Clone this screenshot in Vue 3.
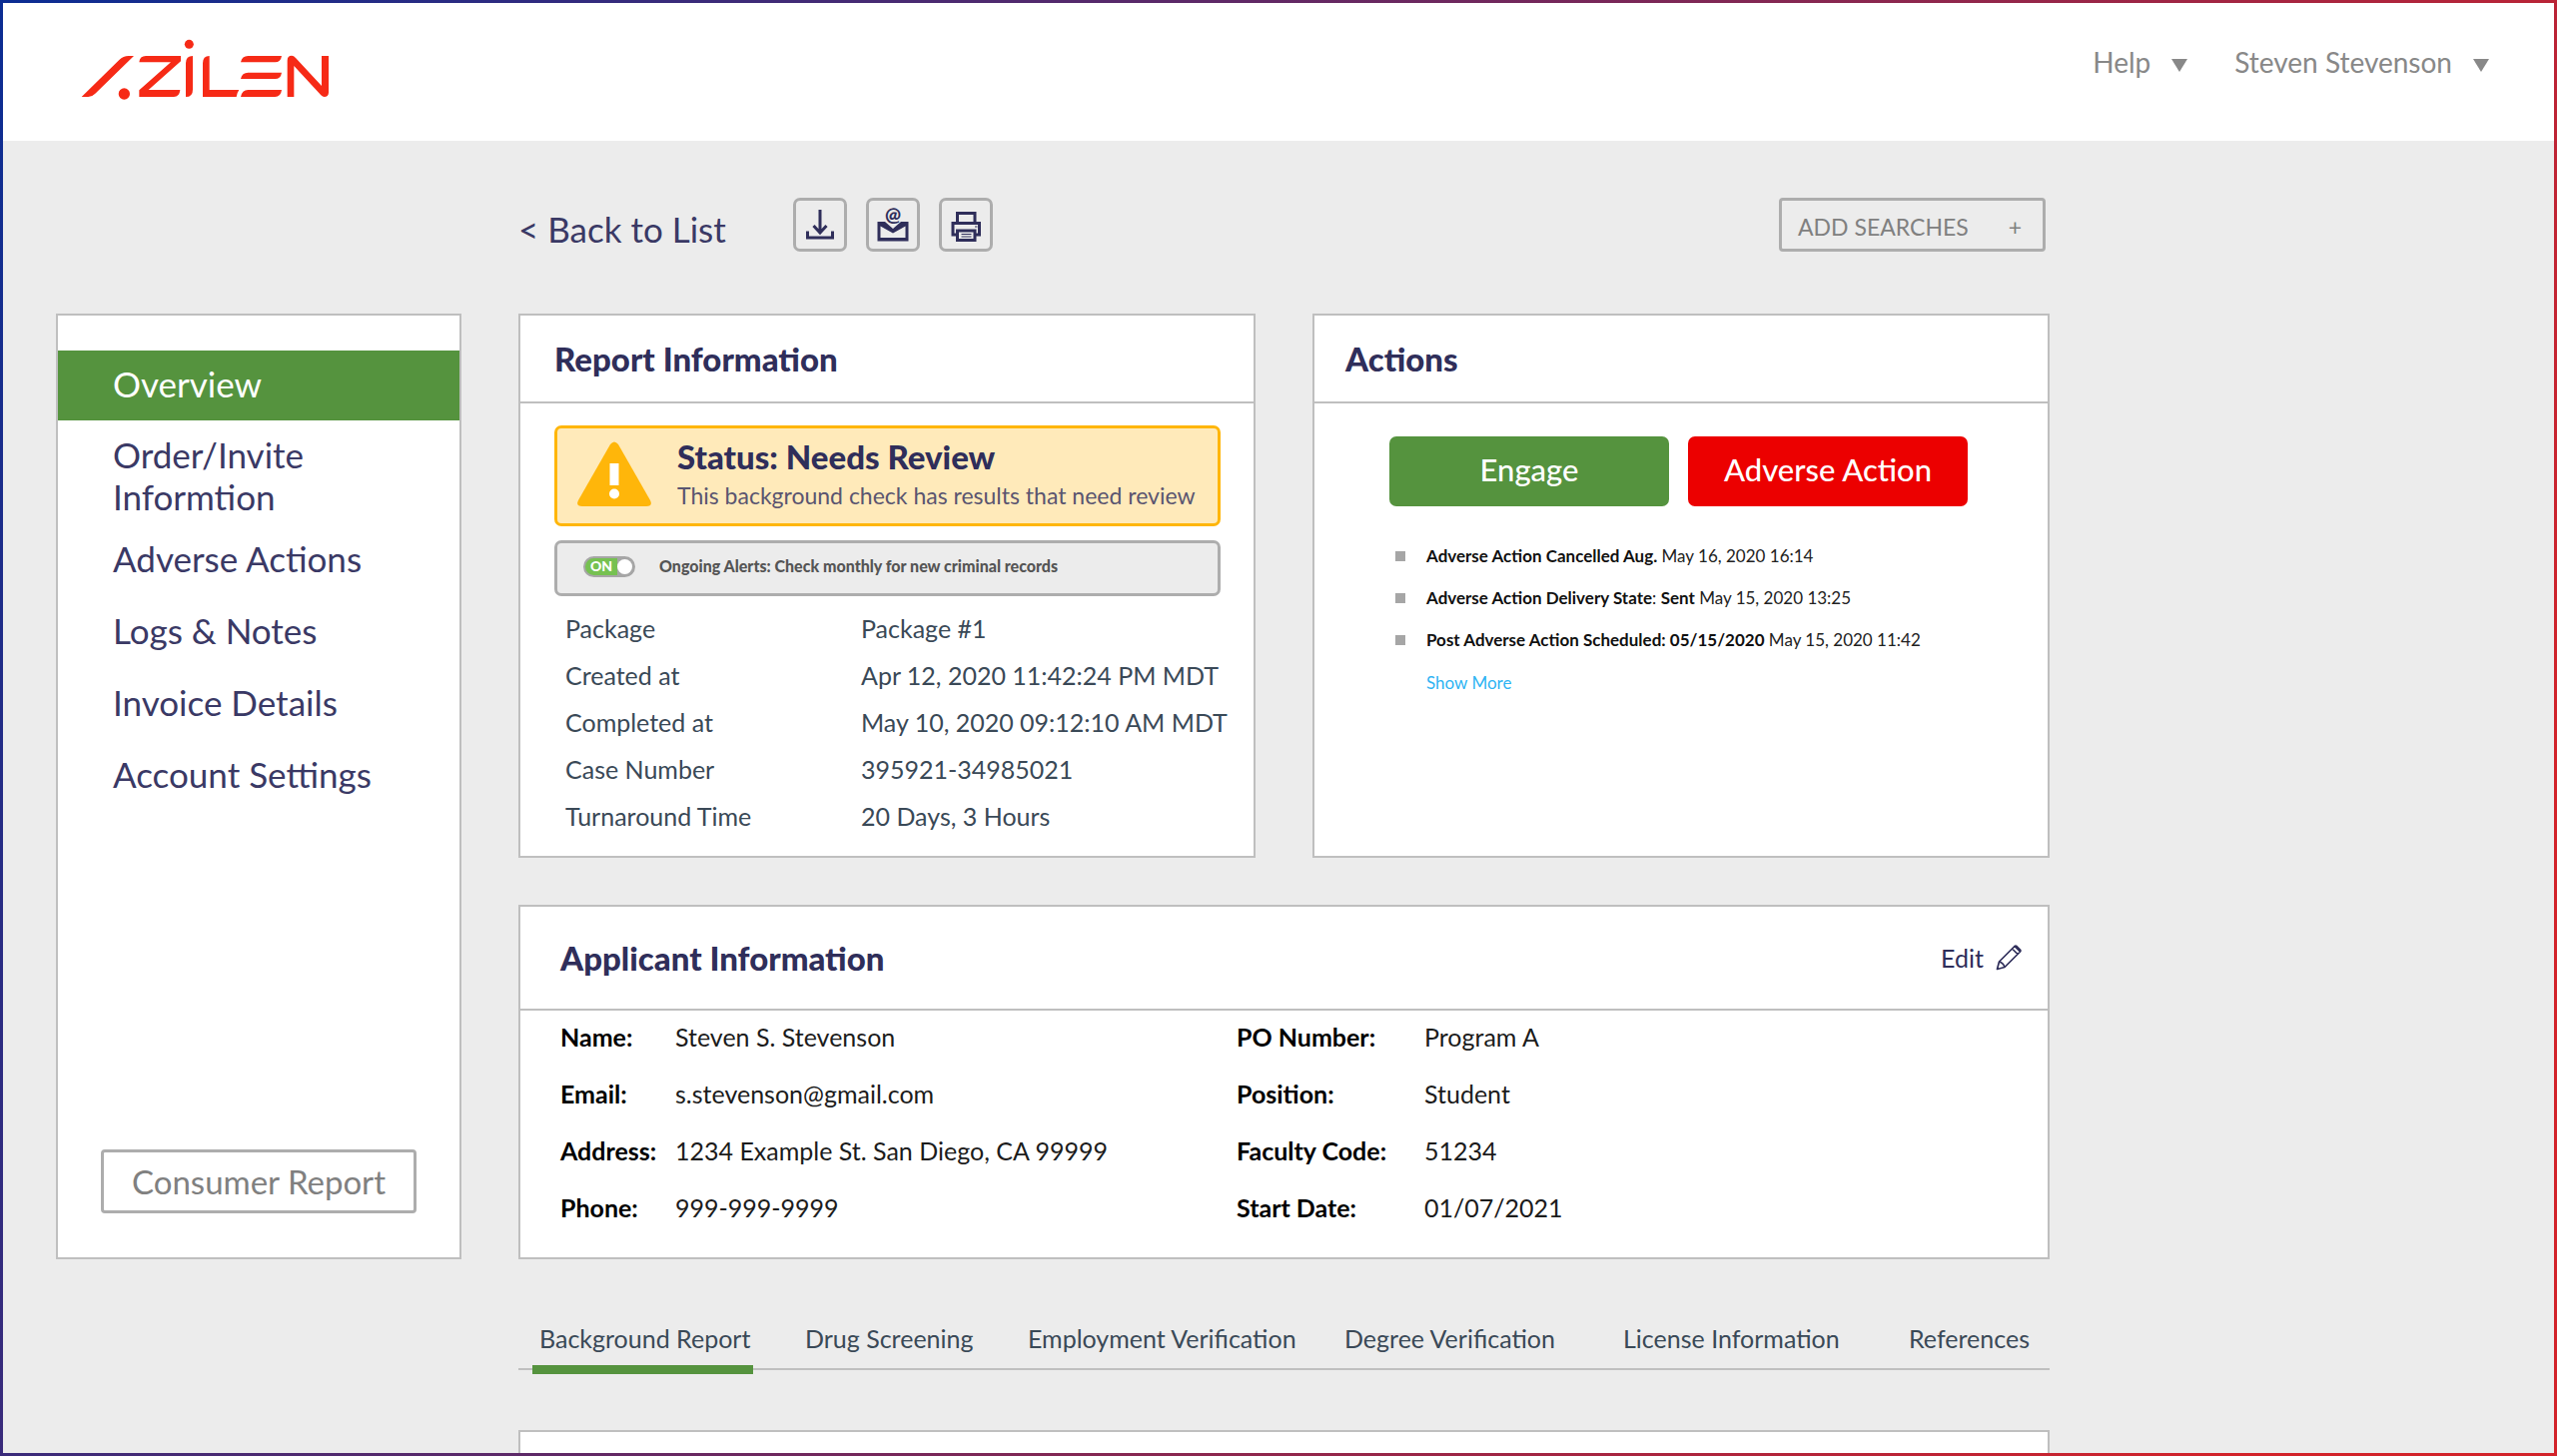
<script setup>
import { ref } from 'vue'

const menus = ['Help', 'Steven Stevenson']

const navItems = [
  { label: 'Overview', active: true },
  { label: 'Order/Invite Informtion', wrapped: true },
  { label: 'Adverse Actions' },
  { label: 'Logs & Notes' },
  { label: 'Invoice Details' },
  { label: 'Account Settings' }
]

const reportRows = [
  ['Package', 'Package #1'],
  ['Created at', 'Apr 12, 2020 11:42:24 PM MDT'],
  ['Completed at', 'May 10, 2020 09:12:10 AM MDT'],
  ['Case Number', '395921-34985021'],
  ['Turnaround Time', '20 Days, 3 Hours']
]

const personal = [
  ['Name:', 'Steven S. Stevenson'],
  ['Email:', 's.stevenson@gmail.com'],
  ['Address:', '1234 Example St. San Diego, CA 99999'],
  ['Phone:', '999-999-9999']
]

const enrollment = [
  ['PO Number:', 'Program A'],
  ['Position:', 'Student'],
  ['Faculty Code:', '51234'],
  ['Start Date:', '01/07/2021']
]

const tabs = [
  'Background Report',
  'Drug Screening',
  'Employment Verification',
  'Degree Verification',
  'License Information',
  'References'
]

const activeTab = ref(0)
const alertsOn = ref(true)
</script>

<template>
  <div class="frame">
    <div class="page">
      <header class="topbar">
        <a class="logo" href="#" aria-label="Azilen">
          <svg viewBox="243 117 747 186" width="249" height="62" fill="#f62a16">
            <path d="M245 291 358 180Q370 168 386 168H402L286 281Q276 291 265 291Z" />
            <circle cx="373" cy="282" r="17" />
            <path d="M418 187Q420 168 438 168H543V184L446 270H541Q539 291 522 291H418V271L513 187Z" />
            <circle cx="568" cy="133" r="13.500" />
            <path d="M558 291V190Q558 168 579 168V269Q579 291 558 291Z" />
            <path d="M609 291V190Q609 168 629 168V270H718Q711 280 710 291Z" />
            <path d="M723 187Q727 168 745 168H846Q843 187 826 187Z" />
            <path d="M723 237Q727 218 745 218H846Q843 237 826 237Z" />
            <path d="M723 291Q727 270 745 270H846Q843 291 826 291Z" />
            <path d="M863 291V182Q863 167 876 167Q882 167 888 174L966 258V168H987V278Q986 291 974 291Q969 291 964 286L883 198V291Z" />
          </svg>
        </a>
        <div class="menus">
          <button v-for="menu in menus" :key="menu" class="menu" type="button">
            {{ menu }}
            <svg width="16" height="13" viewBox="0 0 16 13" fill="#888"><path d="M0 0H16L8 13Z" /></svg>
          </button>
        </div>
      </header>

      <div class="layout">
        <div class="toolbar">
          <a class="back" href="#">&lt; Back to List</a>
          <div class="tools">
            <button class="tool" type="button" aria-label="Download">
              <svg viewBox="0 0 48 48" width="48" height="48" fill="none" stroke="#2f2e5a" stroke-width="3">
                <path d="M24 9V32M17.500 25 24 32 30.500 25M11.500 30.500V37H36.500V30.500" />
              </svg>
            </button>
            <button class="tool" type="button" aria-label="Email">
              <svg viewBox="0 0 48 48" width="48" height="48">
                <path
                  fill="#2f2e5a"
                  fill-rule="evenodd"
                  d="M8.500 21H16L24 28 32 21H39.500V40.500H8.500ZM11.500 25.500V37H36.500V25.500L24 32.500Z"
                />
                <text x="24" y="21" text-anchor="middle" class="at">@</text>
              </svg>
            </button>
            <button class="tool" type="button" aria-label="Print">
              <svg viewBox="0 0 48 48" width="48" height="48" fill="none" stroke="#2f2e5a" stroke-width="3">
                <path d="M15.500 22V12.500H33V22" />
                <path d="M15 34H11V22.500H37.500V34H34" />
                <path d="M15.500 30H33V39.500H15.500Z" />
                <path stroke-width="1.200" d="M19.500 33.500H29.500M19.500 36H29.500M33 26H35.500" />
              </svg>
            </button>
          </div>
          <button class="outline add" type="button"><span>ADD SEARCHES</span><span>+</span></button>
        </div>

        <aside class="card sidebar">
          <nav>
            <a
              v-for="item in navItems"
              :key="item.label"
              class="nav-link"
              :class="{ active: item.active, wrapped: item.wrapped }"
              href="#"
            >{{ item.label }}</a>
          </nav>
          <button class="outline consumer" type="button">Consumer Report</button>
        </aside>

        <main class="cards">
          <section class="card report">
            <header class="card-head"><h2>Report Information</h2></header>
            <div class="report-body">
              <div class="status">
                <svg viewBox="0 0 74 66" width="74" height="66">
                  <path fill="#ffb60a" d="M33 3Q37-2 41 3L73 59Q76 65 69 65H5Q-2 65 1 59Z" />
                  <path fill="#fff" d="M32.500 22H41.500V44H32.500Z" />
                  <circle fill="#fff" cx="37" cy="52.500" r="5" />
                </svg>
                <div>
                  <h3>Status: Needs Review</h3>
                  <p>This background check has results that need review</p>
                </div>
              </div>
              <label class="alerts">
                <span class="switch">
                  <input v-model="alertsOn" type="checkbox" />
                  <span class="track" :class="{ off: !alertsOn }">{{ alertsOn ? 'ON' : 'OFF' }}</span>
                </span>
                <span>Ongoing Alerts: Check monthly for new criminal records</span>
              </label>
              <table class="facts">
                <tbody>
                  <tr v-for="[name, value] in reportRows" :key="name">
                    <th scope="row">{{ name }}</th>
                    <td>{{ value }}</td>
                  </tr>
                </tbody>
              </table>
            </div>
          </section>

          <section class="card actions">
            <header class="card-head"><h2>Actions</h2></header>
            <div class="actions-body">
              <div class="action-buttons">
                <button class="solid engage" type="button">Engage</button>
                <button class="solid adverse" type="button">Adverse Action</button>
              </div>
              <ul class="events">
                <li><span><b>Adverse Action Cancelled Aug.</b> May 16, 2020 16:14</span></li>
                <li><span><b>Adverse Action Delivery State</b>: <b>Sent</b> May 15, 2020 13:25</span></li>
                <li><span><b>Post Adverse Action Scheduled: 05/15/2020</b> May 15, 2020 11:42</span></li>
              </ul>
              <a class="more" href="#">Show More</a>
            </div>
          </section>

          <section class="card applicant">
            <header class="card-head">
              <h2>Applicant Information</h2>
              <button class="edit" type="button">
                Edit
                <svg viewBox="0 0 26 26" width="26" height="26" fill="none" stroke="#2f2e5a" stroke-width="1.700" stroke-linejoin="round">
                  <path d="M1.500 24.500 3.500 17 19 1.500Q20 .8 21 1.500L24.500 5Q25.300 6 24.500 7L9 22.500ZM16.500 4 22 9.500M3.500 17Q7.500 18 9 22.500M19 1.500 24.500 7" />
                </svg>
              </button>
            </header>
            <div class="applicant-body">
              <dl class="personal">
                <template v-for="[name, value] in personal" :key="name">
                  <dt>{{ name }}</dt>
                  <dd>{{ value }}</dd>
                </template>
              </dl>
              <dl class="enrollment">
                <template v-for="[name, value] in enrollment" :key="name">
                  <dt>{{ name }}</dt>
                  <dd>{{ value }}</dd>
                </template>
              </dl>
            </div>
          </section>
        </main>

        <section class="results">
          <div class="tabs" role="tablist">
            <button
              v-for="(tab, i) in tabs"
              :key="tab"
              class="tab"
              :class="{ current: i === activeTab }"
              type="button"
              role="tab"
              :aria-selected="i === activeTab"
              @click="activeTab = i"
            >{{ tab }}</button>
          </div>
          <div class="card panel"></div>
        </section>
      </div>
    </div>
  </div>
</template>

<style>
body {
  margin: 0;
}
</style>

<style scoped>
* {
  box-sizing: border-box;
}

h2,
h3,
p,
ul,
dl,
dd {
  margin: 0;
  padding: 0;
}

button {
  margin: 0;
  padding: 0;
  border: 0;
  background: none;
  color: inherit;
  font: inherit;
  cursor: pointer;
}

a {
  color: inherit;
  text-decoration: none;
}

svg {
  display: block;
  flex: none;
}

.frame {
  display: flex;
  min-height: 100vh;
  padding: 3px;
  background: linear-gradient(115deg, #0b2d93, #d2232a 90%);
  color: #2f2e5a;
  font-family: Lato, "Open Sans", sans-serif;
  font-size: 25px;
  line-height: 30px;
}

.page {
  flex: 1;
  display: flex;
  flex-direction: column;
  background: #ececec;
}

.topbar {
  display: flex;
  justify-content: space-between;
  align-items: flex-start;
  height: 138px;
  padding: 36px 65px 0 78px;
  background: #fff;
}

.menus {
  display: flex;
  gap: 47px;
  padding-top: 6px;
}

.menu {
  display: flex;
  align-items: center;
  gap: 21px;
  color: #888;
  font-size: 28px;
  line-height: 34px;
}

.menu svg {
  margin-top: 6px;
}

.layout {
  flex: 1;
  display: grid;
  grid-template-columns: 406px minmax(0, 1533px);
  grid-template-rows: auto auto 1fr;
  column-gap: 57px;
  padding: 0 53px;
}

.toolbar {
  grid-column: 2;
  display: flex;
  align-items: flex-end;
  padding: 57px 4px 62px 0;
}

.back {
  width: 275px;
  color: #3a3965;
  font-size: 35px;
  line-height: 46px;
}

.tools {
  display: flex;
  gap: 19px;
}

.tool {
  width: 54px;
  height: 54px;
  border: 3px solid #adadad;
  border-radius: 7px;
}

.at {
  fill: #2f2e5a;
  font-size: 19px;
  font-weight: 900;
}

.outline {
  border: 3px solid #adadad;
  border-radius: 4px;
  color: #808080;
}

.add {
  display: flex;
  justify-content: space-between;
  align-items: center;
  width: 267px;
  height: 54px;
  margin-left: auto;
  padding: 3px 21px 0 16px;
  font-size: 23px;
}

.card {
  border: 2px solid #bfbfbf;
  background: #fff;
}

.sidebar {
  display: flex;
  flex-direction: column;
  justify-content: space-between;
  padding: 35px 0 44px;
}

.nav-link {
  display: block;
  padding: 14px 48px 16px 55px;
  color: #3a3965;
  font-size: 35px;
  line-height: 42px;
}

.nav-link.active {
  padding-block: 12px 16px;
  background: #55933e;
  color: #fff;
}

.nav-link.wrapped {
  padding-block: 13px 6px;
}

.consumer {
  height: 64px;
  margin: 0 43px;
  font-size: 33px;
}

.cards {
  display: grid;
  grid-template-columns: minmax(0, 1fr) minmax(0, 1fr);
  gap: 47px 57px;
}

.card-head {
  display: flex;
  justify-content: space-between;
  align-items: center;
  height: 88px;
  padding: 0 34px;
  border-bottom: 2px solid #bfbfbf;
}

h2,
h3 {
  font-size: 33px;
  font-weight: 900;
  line-height: 36px;
}

.report-body {
  padding: 22px 33px 17px 34px;
}

.status {
  display: flex;
  align-items: center;
  gap: 26px;
  height: 101px;
  padding: 0 20px 4px;
  border: 3px solid #ffb60a;
  border-radius: 7px;
  background: #ffeaba;
}

.status p {
  padding-top: 6px;
  color: #5a5570;
  font-size: 23px;
  white-space: nowrap;
}

.alerts {
  display: flex;
  align-items: center;
  gap: 24px;
  height: 56px;
  margin-top: 14px;
  padding: 0 26px 4px;
  border: 3px solid #adadad;
  border-radius: 7px;
  background: #ececec;
  color: #555;
  font-size: 16px;
  font-weight: 900;
  line-height: 20px;
}

.switch {
  position: relative;
  width: 52px;
}

.switch input {
  position: absolute;
  inset: 0;
  width: 100%;
  height: 100%;
  margin: 0;
  opacity: 0;
}

.track {
  display: flex;
  justify-content: space-between;
  align-items: center;
  height: 21px;
  padding: 0 1px 0 5px;
  border: 2px solid #a6a6a6;
  border-radius: 11px;
  background: linear-gradient(90deg, #76c151 32px, #a6a6a6 32px);
  color: #fff;
  font-size: 14px;
}

.track.off {
  background: #a6a6a6;
}

.track::after {
  content: "";
  width: 15px;
  height: 15px;
  border-radius: 50%;
  background: #fff;
}

.facts {
  width: 100%;
  margin-top: 8px;
  border-collapse: collapse;
  color: #3a4957;
}

.facts th,
.facts td {
  height: 47px;
  padding: 0;
  font-weight: 400;
  text-align: left;
  white-space: nowrap;
}

.facts th {
  width: 307px;
  padding-left: 11px;
}

.facts td {
  width: 360px;
  max-width: 360px;
}

.actions .card-head {
  padding: 0 31px;
}

.actions-body {
  padding: 33px 80px 0 75px;
}

.action-buttons {
  display: flex;
  gap: 19px;
}

.solid {
  flex: 1;
  height: 70px;
  padding-bottom: 5px;
  border-radius: 7px;
  color: #fff;
  font-size: 31px;
  font-weight: 500;
}

.engage {
  background: #55933e;
}

.adverse {
  background: #ec0000;
}

.events {
  margin-top: 29px;
  list-style: none;
}

.events li {
  display: flex;
  align-items: center;
  gap: 21px;
  padding-left: 6px;
  color: #222;
  font-size: 17px;
  line-height: 42px;
  white-space: nowrap;
}

.events li::before {
  content: "";
  width: 10px;
  height: 10px;
  background: #a6a6a6;
}

.events b {
  color: #111;
}

.more {
  display: inline-block;
  padding-left: 37px;
  color: #2fb4f3;
  font-size: 17px;
  line-height: 44px;
}

.applicant {
  grid-column: 1 / -1;
}

.applicant .card-head {
  height: 104px;
  padding: 0 26px 0 40px;
}

.edit {
  display: flex;
  align-items: center;
  gap: 12px;
}

.applicant-body {
  display: grid;
  grid-template-columns: 677fr 812fr;
  padding: 11px 0 35px 40px;
  color: #1c1c1c;
}

.applicant-body dl {
  display: grid;
  grid-template-columns: 115px 1fr;
  row-gap: 27px;
}

.applicant-body .enrollment {
  grid-template-columns: 188px 1fr;
}

dt {
  color: #000;
  font-weight: 700;
}

.results {
  grid-column: 2;
  display: flex;
  flex-direction: column;
  padding-top: 64px;
}

.tabs {
  display: grid;
  grid-template-columns: 266fr 223fr 317fr 279fr 286fr 148fr;
  padding-left: 14px;
  border-bottom: 2px solid #bfbfbf;
  color: #3a4957;
}

.tab {
  position: relative;
  justify-self: start;
  padding: 0 3px 15px 7px;
  white-space: nowrap;
}

.tab.current::after {
  content: "";
  position: absolute;
  right: 0;
  bottom: -6px;
  left: 0;
  height: 9px;
  background: #55933e;
}

.panel {
  flex: 1;
  min-height: 23px;
  margin-top: 60px;
  border-bottom: 0;
}
</style>
